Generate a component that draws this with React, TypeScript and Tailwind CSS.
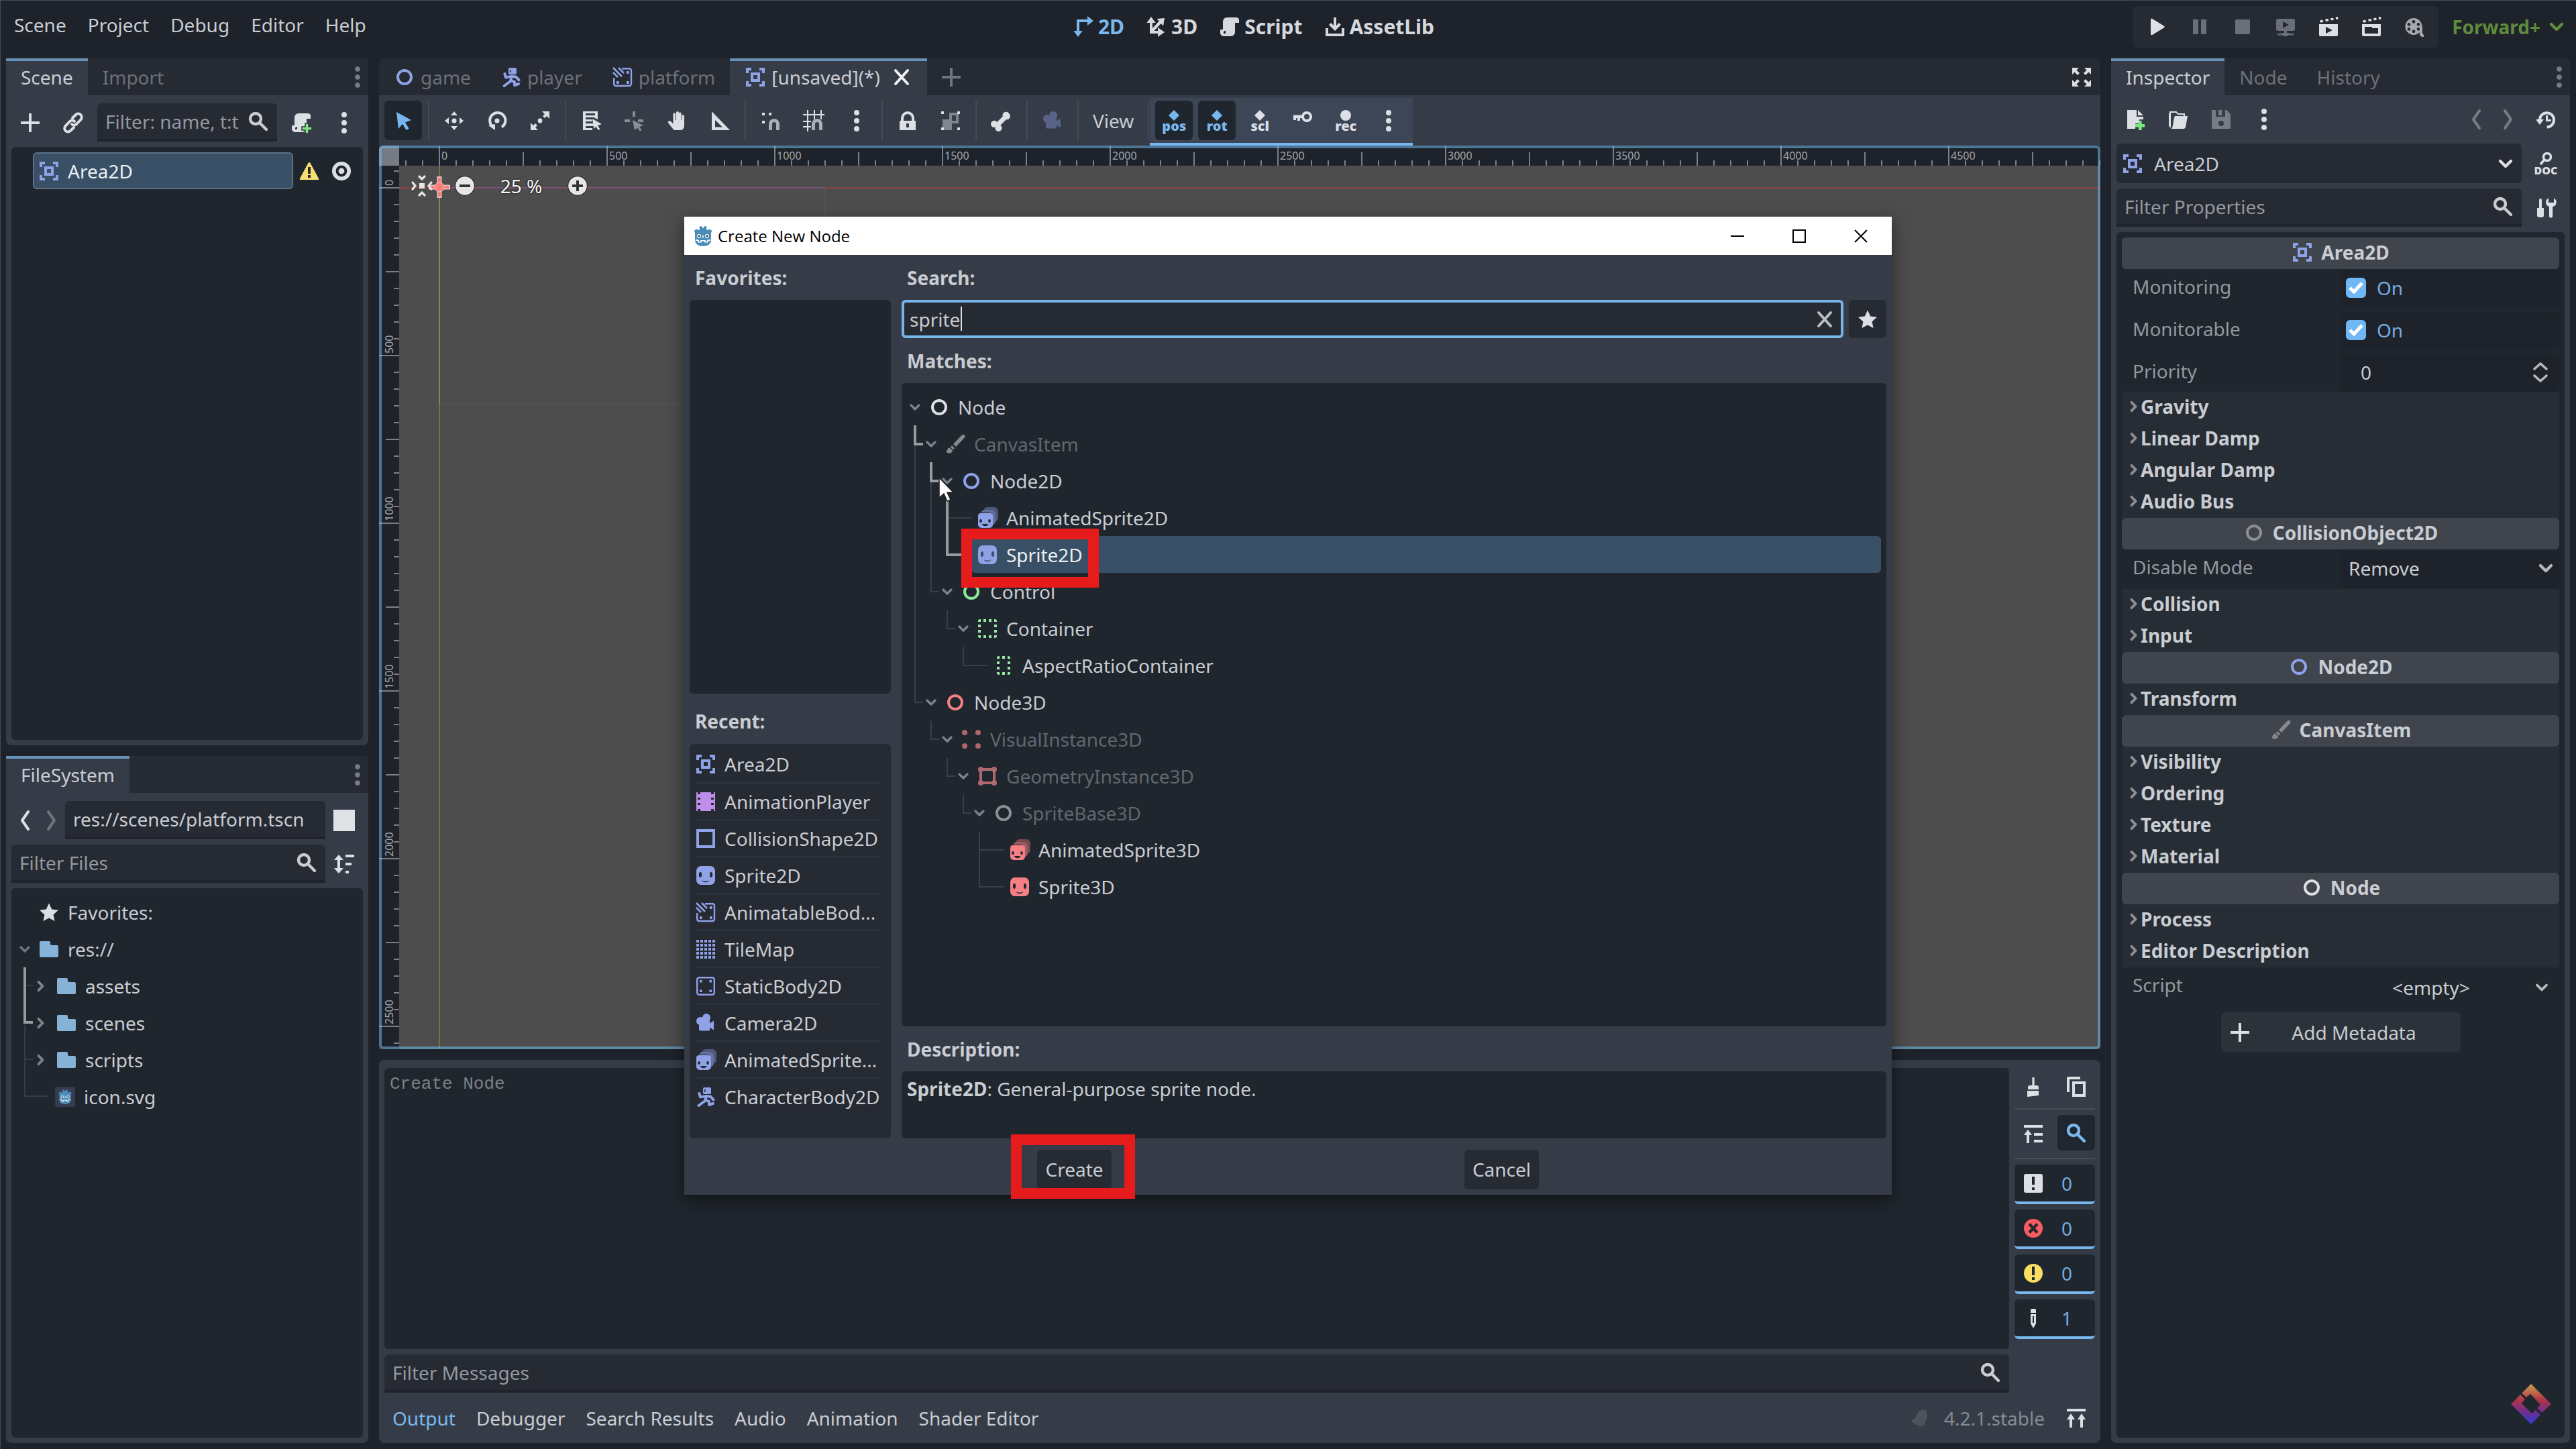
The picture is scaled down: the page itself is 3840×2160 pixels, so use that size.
import React, { JSX, ReactNode } from "react";

const line = {
  fill: "none",
  stroke: "currentColor",
  strokeWidth: 2,
} as const;

const frameCorners = (
  <path
    fillRule="evenodd"
    d="M1 1v4h2V3h2V1zm10 0v2h2v2h2V1zM4.500 4.500v7h7v-7zm2 2h3v3h-3zM1 11v4h4v-2H3v-2zm12 0v2h-2v2h4v-4z"
  />
);

const spriteFace = (
  <path
    fillRule="evenodd"
    d="M4.500 1h7A3.500 3.500 0 0 1 15 4.500v7a3.500 3.500 0 0 1-3.500 3.500h-7A3.500 3.500 0 0 1 1 11.500v-7A3.500 3.500 0 0 1 4.500 1zM4 5.500a1 1.200 0 0 0-1 1.200v1.600a1 1.200 0 0 0 2 0V6.700a1 1.200 0 0 0-1-1.200zm8 0a1 1.200 0 0 0-1 1.200v1.600a1 1.200 0 0 0 2 0V6.700a1 1.200 0 0 0-1-1.200zM5.300 11.500c.8 2.200 4.600 2.200 5.400 0-1.400 1-4 1-5.400 0z"
  />
);

const animatedFace = (
  <>
    <path
      fillOpacity=".4"
      d="M8 0h5a3 3 0 0 1 3 3v5a3 3 0 0 1-2 2.800V5a3 3 0 0 0-3-3H5.200A3 3 0 0 1 8 0z"
    />
    <path
      fillOpacity=".6"
      d="M6 2h5a3 3 0 0 1 3 3v5.500a3 3 0 0 1-2 2.600V7a3 3 0 0 0-3-3H3.200A3 3 0 0 1 6 2z"
    />
    <path
      fillRule="evenodd"
      d="M3 4.500h7a2 2 0 0 1 2 2V13a2.500 2.500 0 0 1-2.500 2.500h-6A2.500 2.500 0 0 1 1 13V6.500a2 2 0 0 1 2-2zM3 9c-.6 0-.9.600-.9 1.300s.3 1.200.9 1.200.9-.5.9-1.200S3.600 9 3 9zm6.500 0c-.6 0-.9.600-.9 1.300s.3 1.200.9 1.200.9-.5.9-1.200S10.100 9 9.500 9zM4 12.500c.5 2.200 4.200 2.200 4.700 0z"
    />
  </>
);

const snapMagnet = (
  <path
    opacity=".7"
    d="M9 15v-4.500a1.500 1.500 0 0 1 3 0V15h2.500v-4.500a4 4 0 0 0-8 0V15z"
  />
);

const scriptScroll = (
  <path
    fillRule="evenodd"
    d="M6 1a3 3 0 0 0-3 3v6H1v2.500A2.500 2.500 0 0 0 3.500 15H9a3 3 0 0 0 3-3V5h3V3a2 2 0 0 0-2-2zM4 11h1v2H3.500v-1z"
  />
);

const clapper = (
  <path d="M1.500 3.300l2-.5.800 1.600-2.200.5zm4-.9 2.200-.5.500 1.700-2.200.4zm4-.8 2-.4.500 1.600-2 .4zm3.800-.8 1.700-.3.300 1.700-1.700.3z" />
);

const godotHead = (
  <>
    <path
      fill="#4b8dba"
      d="M2 5.500 1.300 4l1.800-1.300L4.500 3.500l1-.4L5.300 1l1.600-.6.9 1.600h.4L9.100.4l1.600.6-.2 2.100 1 .4 1.400-.8L14.700 4 14 5.500V11c0 3-2.700 4.500-6 4.500S2 14 2 11z"
    />
    <circle cx="5" cy="8" r="1.500" fill="#fff" />
    <circle cx="11" cy="8" r="1.500" fill="#fff" />
    <circle cx="5" cy="8" r=".8" fill="#333" />
    <circle cx="11" cy="8" r=".8" fill="#333" />
    <path d="M8 7.500v1.700M2.300 10.800l2.200.4v1.200h2v-1h3v1h2v-1.200l2.200-.4" fill="none" stroke="#fff" strokeWidth=".8" />
  </>
);

const icons: Record<string, ReactNode> = {
  node: <circle cx="8" cy="8" r="5" {...line} />,
  area: frameCorners,
  sprite: spriteFace,
  animatedSprite: animatedFace,
  runner: (
    <>
      <path
        fillRule="evenodd"
        d="M7 1h4a1 1 0 0 1 1 1v3a1 1 0 0 1-1 1H7a1 1 0 0 1-1-1V2a1 1 0 0 1 1-1zm0 1.500v2h.8v-2z"
      />
      <path
        {...line}
        strokeLinecap="round"
        strokeLinejoin="round"
        d="M3.200 5.500 4 8.200l4.200-.7 3.300.2 2.300 2.500M8.500 7.500 7.500 11 2.800 14.500M7.500 10.500l3 1L10.500 14l3-1"
      />
    </>
  ),
  animatableBody: (
    <>
      <path
        {...line}
        strokeWidth="1.200"
        d="M7.500 1.600H13a1.500 1.500 0 0 1 1.500 1.500V13a1.500 1.500 0 0 1-1.500 1.500H3A1.500 1.500 0 0 1 1.600 13V8.500"
      />
      <path d="M11 3.500h1.800v2H11zM3.500 11h1.800v2H3.500zM11 11h1.800v2H11z" />
      <path {...line} strokeWidth="1.300" d="M1 4.500 4.500 8M1 1l6.500 6.500M5 1l4 4" />
    </>
  ),
  collisionShape: <rect x="2" y="2" width="12" height="12" {...line} />,
  staticBody: (
    <>
      <rect x="1.600" y="1.600" width="12.800" height="12.800" rx="1.500" {...line} strokeWidth="1.200" />
      <path d="M3.500 3.500h1.800v1.800H3.500zM10.700 3.500h1.800v1.800h-1.800zM3.500 10.700h1.800v1.800H3.500zM10.700 10.700h1.800v1.800h-1.800z" />
    </>
  ),
  film: (
    <path
      fillRule="evenodd"
      d="M1 1v14h1v-1.500h2V15h8v-1.500h2V15h1V1h-1v1.500h-2V1H4v1.500H2V1zm1 4h2v1.500H2zm10 0h2v1.500h-2zM2 9h2v1.500H2zm10 0h2v1.500h-2z"
    />
  ),
  tileMap: (
    <>
      {[1, 4, 7, 10, 13].map((y) =>
        [1, 4, 7, 10, 13].map((x) => <rect key={`${x}-${y}`} x={x} y={y} width="2" height="2" />)
      )}
    </>
  ),
  camera: (
    <>
      <circle cx="4" cy="6.500" r="3" />
      <circle cx="8.500" cy="4" r="3" />
      <path d="M3 6h8v2.200l3-2v7l-3-2V13a.8.8 0 0 1-.8.8H4a1 1 0 0 1-1-1z" />
    </>
  ),
  brush: (
    <path d="M15 1.200c-1-.7-2 0-2.600.6L6.500 8l2 2 5.900-6.300c.7-.8 1.300-1.800.6-2.500zM5.600 9 7.500 11l-1 1.200-2.200-2zM3.600 10.600c-1.500.2-1.400 2.400-2.600 3 1.500 1.700 4.600 1.700 5-.9z" />
  ),
  container: (
    <path d="M1 2.500A1.500 1.500 0 0 1 2.500 1H3v2H1zM5 1h2v2H5zm4 0h2v2H9zm4 0h.5A1.500 1.500 0 0 1 15 2.500V3h-2zM1 5h2v2H1zm12 0h2v2h-2zM1 9h2v2H1zm12 0h2v2h-2zM1 13h2v2h-.5A1.500 1.500 0 0 1 1 13.500zm4 0h2v2H5zm4 0h2v2H9zm4 0h2v.5a1.500 1.500 0 0 1-1.500 1.500H13z" />
  ),
  aspectContainer: (
    <path d="M3 2.500A1.500 1.500 0 0 1 4.500 1H5v2H3zM7 1h2v2H7zm4 0h.5A1.500 1.500 0 0 1 13 2.500V3h-2zM3 5h2v2H3zm8 0h2v2h-2zM3 9h2v2H3zm8 0h2v2h-2zM3 13h2v2h-.5A1.500 1.500 0 0 1 3 13.500zm4 0h2v2H7zm4 0h2v.5a1.500 1.500 0 0 1-1.500 1.500H11z" />
  ),
  visual: (
    <>
      <circle cx="3" cy="3" r="2" />
      <circle cx="13" cy="3" r="2" />
      <circle cx="3" cy="13" r="2" />
      <circle cx="13" cy="13" r="2" />
    </>
  ),
  geometry: (
    <>
      <rect x="3" y="3" width="10" height="10" {...line} />
      <circle cx="3" cy="3" r="2" />
      <circle cx="13" cy="3" r="2" />
      <circle cx="3" cy="13" r="2" />
      <circle cx="13" cy="13" r="2" />
    </>
  ),
  godot: godotHead,
  godotFile: (
    <>
      <rect x="-.5" y="-.5" width="17" height="17" rx="1.500" fill="#363d52" />
      <g transform="translate(1.500 1.500) scale(.82)">{godotHead}</g>
    </>
  ),
  folder: <path d="M1 3a1 1 0 0 1 1-1h6a1 1 0 0 1 1 1v1a1 1 0 0 0 1 1h4a1 1 0 0 1 1 1v7a1 1 0 0 1-1 1H2a1 1 0 0 1-1-1z" />,
  star: <path d="m8 1.300 2.100 4.500 4.900.6-3.700 3.300 1 4.800L8 12.200l-4.300 2.300 1-4.800L1 6.400l4.900-.6z" />,
  plus: <path d="M7 1v6H1v2h6v6h2V9h6V7H9V1z" />,
  link: (
    <path
      {...line}
      strokeLinecap="round"
      d="M7.500 4.500 9.800 2.200a2.500 2.500 0 0 1 4 3.300L10.500 9a2.300 2.300 0 0 1-3.500 0M8.500 11.500l-2.300 2.300a2.500 2.500 0 0 1-4-3.300L5.500 7A2.300 2.300 0 0 1 9 7"
    />
  ),
  search: (
    <>
      <circle cx="6" cy="6" r="4" {...line} strokeWidth="2.200" />
      <path {...line} strokeWidth="2.200" strokeLinecap="round" d="m9.500 9.500 4.500 4.500" />
    </>
  ),
  scriptAdd: (
    <>
      {scriptScroll}
      <path fill="#7ce87f" stroke="#363c47" strokeWidth=".8" d="M11 8.500v2.500H8.500v2.500H11V16h2.500v-2.500H16V11h-2.500V8.500z" />
    </>
  ),
  script: scriptScroll,
  dots: (
    <>
      <circle cx="8" cy="2" r="2" />
      <circle cx="8" cy="8" r="2" />
      <circle cx="8" cy="14" r="2" />
    </>
  ),
  dotsSmall: (
    <>
      <circle cx="8" cy="2" r="1.900" />
      <circle cx="8" cy="8" r="1.900" />
      <circle cx="8" cy="14" r="1.900" />
    </>
  ),
  warning: (
    <>
      <path fill="#f8df74" d="M8 1.500a.8.800 0 0 0-.7.400L1 13.500c-.3.600 0 1 .5 1h13c.6 0 .8-.4.500-1L8.700 1.900a.8.800 0 0 0-.7-.4z" />
      <path fill="#2b2b20" d="M7 5h2v5H7zm0 6h2v2H7z" />
    </>
  ),
  eye: (
    <>
      <circle cx="8" cy="8" r="5.600" {...line} strokeWidth="2.800" />
      <circle cx="8" cy="8" r="2.200" />
    </>
  ),
  back: <path {...line} strokeLinecap="round" strokeLinejoin="round" d="M10.500 1.500 6 8l4.500 6.500" />,
  forward: <path {...line} strokeLinecap="round" strokeLinejoin="round" d="M5.500 1.500 10 8l-4.500 6.500" />,
  square: <path d="M0 0h16v16H0z" />,
  sort: (
    <>
      <path d="M4 1 .5 5H3v6H.5L4 15l3.500-4H5V5h2.500z" />
      <path d="M9 1h6.500v2H9zM9 7h4.500v2H9zm0 6h2.500v2H9z" />
    </>
  ),
  chevronDown: <path {...line} strokeWidth="2.200" strokeLinecap="round" strokeLinejoin="round" d="m4 6 4 4 4-4" />,
  chevronRight: <path {...line} strokeWidth="2.200" strokeLinecap="round" strokeLinejoin="round" d="m6 4.500 3.500 3.500L6 11.500" />,
  axes2d: (
    <path d="M11 0v2.500H3V11H.7L4 15.500 7.300 11H5V4.500h6V7l4.500-3.500z" />
  ),
  axes3d: (
    <path d="M4 .5.700 5H3v8h6v2.500l5-3.500-5-3.500V11H6.300l5-5.400L13 7.300 14 1.500 8.300 2l1.600 1.800L5 9V5h2.300z" />
  ),
  download: (
    <path d="M7 1v6L5 5 3.500 6.500 8 11l4.500-4.500L11 5 9 7V1zM1 9v6h14V9h-2v4H3V9z" />
  ),
  play: <path d="M3.500 2.500v11a.7.700 0 0 0 1 .6l9-5.500a.7.700 0 0 0 0-1.200l-9-5.500a.7.700 0 0 0-1 .6z" />,
  pause: <path d="M3 2.500h4v11H3zm6 0h4v11H9z" />,
  stop: <rect x="2.500" y="2.500" width="11" height="11" rx="1" />,
  remote: (
    <path
      fillRule="evenodd"
      d="M2.500 2h11A1.500 1.500 0 0 1 15 3.500v6a1.500 1.500 0 0 1-1.500 1.500H9v1.500h1.500v.5H14v1.300h-4l-.6.700H6.500l-.6-.7H2V13h3.500v-.5H7V11H2.500A1.500 1.500 0 0 1 1 9.500v-6A1.500 1.500 0 0 1 2.500 2zM6 4v5l4.500-2.500z"
    />
  ),
  playScene: (
    <>
      {clapper}
      <path fillRule="evenodd" d="M1 6h14v8a1 1 0 0 1-1 1H2a1 1 0 0 1-1-1zm5 2v5l5-2.500z" />
    </>
  ),
  playCustom: (
    <>
      {clapper}
      <path fillRule="evenodd" d="M1 6h14v8a1 1 0 0 1-1 1H2a1 1 0 0 1-1-1zm2 2v5h10V9H8.500V8z" />
    </>
  ),
  reel: (
    <>
      <path
        fillRule="evenodd"
        d="M7.500 1.500a6 6 0 1 1 0 12.500 6 6 0 0 1 0-12.500zm0 1.500a1.200 1.200 0 1 0 0 2.400 1.200 1.200 0 0 0 0-2.400zM4 5a1.200 1.200 0 1 0 0 2.400A1.200 1.200 0 0 0 4 5zm7 0a1.200 1.200 0 1 0 0 2.400A1.200 1.200 0 0 0 11 5zM4 8.500a1.200 1.200 0 1 0 0 2.400 1.200 1.200 0 0 0 0-2.400zm7 0a1.200 1.200 0 1 0 0 2.400 1.200 1.200 0 0 0 0-2.400zm-3.500 1.700a1.200 1.200 0 1 0 0 2.400 1.200 1.200 0 0 0 0-2.400z"
      />
      <path d="M12 8h2v5l1 1v1.500h-1.500L12 14z" />
    </>
  ),
  distraction: (
    <path d="M1 1v5l1.800-1.800L5 6.500 6.500 5 4.200 2.800 6 1zm14 0v5l-1.800-1.800L11 6.500 9.500 5l2.300-2.200L10 1zM1 15v-5l1.800 1.800L5 9.500 6.500 11l-2.300 2.200L6 15zm14 0v-5l-1.800 1.800L11 9.500 9.500 11l2.300 2.200L10 15z" />
  ),
  close: <path {...line} strokeLinecap="round" d="m3.500 3 9 10m0-10-9 10" />,
  select: <path d="m3 1.500 11 6-4.500 1.700 2.800 4.500-2 1.300-2.800-4.600L4.500 14z" />,
  move: (
    <>
      <circle cx="8" cy="8" r="1.800" />
      <path d="M8 1 5.500 4h5zm0 14-2.500-3h5zM1 8l3-2.500v5zm14 0-3-2.500v5z" />
    </>
  ),
  rotate: (
    <>
      <path {...line} d="M5 12.500A5.800 5.800 0 1 1 11.500 12.700" />
      <circle cx="8" cy="8" r="1.800" />
      <path d="M1.500 11.500 6.500 10.500v4.500z" />
    </>
  ),
  scale: (
    <>
      <circle cx="8" cy="8" r="1.700" />
      <path d="M9.500 1H15v5.500l-2-2-1.500 1.500L10 4.500 11.500 3zM6.500 15H1V9.500l2 2L4.500 10 6 11.500 4.500 13z" />
    </>
  ),
  listSelect: (
    <>
      <path fillRule="evenodd" d="M2 1h11v6l-3-1.500H4v1.500h4.500l.6 1.500H4V10h5.700l.6 2H4v1.500h5V15H2zm2 1.500V4h7V2.500z" />
      <path d="m9 6.500 7 4-3 1 1.700 2.700-1.300.8-1.700-2.600L10.200 14z" />
    </>
  ),
  pivot: (
    <g opacity=".5">
      <path d="M7 1h2v4H7zM1 7h4v2H1zm10 0h4v2h-4z" />
      <path d="m7 7.500 8 4-3 1 1.700 2.500-1.300.8-1.700-2.600L8.500 15z" />
    </g>
  ),
  hand: (
    <path d="M8.500 1a1 1 0 0 0-1 1v5.500H7V3a.9.900 0 0 0-1.800 0v7.200L3.500 8.500C2.500 7.600 1 8.400 1.500 9.500L5 14c.5.700 1 1 2 1h3.500a3 3 0 0 0 3-3V4.500a.9.900 0 0 0-1.800 0v3h-.4V2.700a.9.900 0 0 0-1.800 0V7.500V2a1 1 0 0 0-1-1z" />
  ),
  rulerTool: <path fillRule="evenodd" d="M2 1v14h13.500zm2.500 6.500L10 12.800H4.500z" />,
  smartSnap: (
    <>
      <path d="M1.500 2h2v2h-2zm5 0h2v2h-2zm-5 6h2v2h-2z" />
      {snapMagnet}
    </>
  ),
  gridSnap: (
    <>
      <path d="M3 0h1v3h4V0h1v3h4V0h1v3h2v1h-2v3h-1V4H9v3H8V4H4v4h2v1H4v3h2v1H4v3H3v-3H0v-1h3V9H0V8h3V4H0V3h3z" />
      {snapMagnet}
    </>
  ),
  lock: (
    <path
      fillRule="evenodd"
      d="M8 1a5 5 0 0 0-5 5v2H2v7h12V8h-1V6a5 5 0 0 0-5-5zm0 2a3 3 0 0 1 3 3v2H5V6a3 3 0 0 1 3-3zM7 10h2v3H7z"
    />
  ),
  group: (
    <>
      <path opacity=".45" fillRule="evenodd" d="M7 2h7v8H9v5H2V7h5zm2 2v4h3V4z" />
      <path d="M1 1h2v2H1zm12 0h2v2h-2zM1 13h2v2H1zm12 0h2v2h-2z" />
    </>
  ),
  bone: (
    <path d="M10.500 1.500a2.400 2.400 0 0 0-1.600 3.200L4.600 9a2.500 2.500 0 1 0-1.300 3.800 2.500 2.500 0 1 0 3.900-1.400l4.200-4.300a2.500 2.500 0 0 0 2.300-4.200 2.500 2.500 0 0 0-3.200-1.400z" />
  ),
  key: (
    <path fillRule="evenodd" d="M11 1a4 4 0 1 1-3.800 5H6v2H4V6H3v1.500H1V3.800h6.200A4 4 0 0 1 11 1zm0 2a2 2 0 1 0 0 4 2 2 0 0 0 0-4z" />
  ),
  newFile: (
    <>
      <path d="M2 1v14h6v-4h3V8h3V6H9V1zm8 0v4h4z" />
      <path fill="#7ce87f" d="M10.500 9v2.500H8v2.300h2.500V16h2.300v-2.200H15v-2.300h-2.200V9z" />
    </>
  ),
  openFolder: (
    <>
      <path {...line} strokeWidth="1" d="M2 14V2.500h4.500L8 4h4.500v2M1.500 13V3.500" />
      <path d="M5.500 5.500H15l-1.500 8.300a1.500 1.500 0 0 1-1.500 1.200H2.500c2 0 1.500-6 3-9.500z" />
    </>
  ),
  save: (
    <path
      fillRule="evenodd"
      d="M1 1v13a1 1 0 0 0 1 1h12a1 1 0 0 0 1-1V4l-3-3h-1v5H4V1zm5 0v4h2.500V1zm2 8a2 2 0 1 1 0 4 2 2 0 0 1 0-4z"
    />
  ),
  history: (
    <>
      <path {...line} d="M3.500 9A5.300 5.300 0 1 1 8.800 13.700" />
      <path d="M.5 8h6L3.500 12zM8 5h1.500v3H12v1.500H8z" />
    </>
  ),
  tools: (
    <path d="M4 1a1 1 0 0 0-1 1v6H1.500v5.500A1.500 1.500 0 0 0 3 15h2a1.500 1.500 0 0 0 1.500-1.500V8H5V2a1 1 0 0 0-1-1zm6-.2A3.300 3.300 0 0 0 10.500 7v7a1.300 1.300 0 0 0 2.600 0V7A3.300 3.300 0 0 0 14 .8V4h-4z" />
  ),
  upDown: (
    <path {...line} strokeWidth="1.800" strokeLinecap="round" strokeLinejoin="round" d="m3.500 5.500 4.500-4 4.500 4m-9 5 4.500 4 4.500-4" />
  ),
  clear: <path d="M7.200 1v6H5.500a1.500 1.500 0 0 0-1.500 1.500V10h8V8.500A1.500 1.500 0 0 0 10.500 7H8.800V1zM3.500 11v4.500l8.500-1V11z" />,
  copy: (
    <path fillRule="evenodd" d="M2 .5A1 1 0 0 0 1 1.500V12h2V2.500h8v-2zM5 4v11.500h10V4zm2 2h6v7.500H7z" />
  ),
  collapse: <path d="M1 1.500h14v2H1zM4 5 1 9h2v6h2V9h2zm4.500 2.500H15v2H8.500zm0 5H15v2H8.500z" />,
  errorBadge: (
    <>
      <circle cx="8" cy="8" r="7" fill="#f75d60" />
      <path d="m5 4.800 6 6.400m0-6.400-6 6.400" fill="none" stroke="#23282f" strokeWidth="2.200" />
    </>
  ),
  warnBadge: (
    <>
      <circle cx="8" cy="8" r="7" fill="#f8df64" />
      <path d="M7 3h2v6.500H7zm0 8h2v2H7z" fill="#23282f" />
    </>
  ),
  popup: <path fillRule="evenodd" d="M2.500 1h11A1.500 1.500 0 0 1 15 2.500v11a1.500 1.500 0 0 1-1.500 1.500h-11A1.500 1.500 0 0 1 1 13.500v-11A1.500 1.500 0 0 1 2.500 1zM7 3v6h2V3zm0 8v2h2v-2z" />,
  pencil: <path fillRule="evenodd" d="M6 2a1 1 0 0 1 1-1h2a1 1 0 0 1 1 1v2H6zm0 3h4v7l-2 3.500L6 12zm1.500 1.500v5h1v-5z" />,
  bell: <path d="M9.500 1.500c-3 1-4.500 3.500-5.500 6.500L1 9.500C2 12 6 14 10.500 14l1-3c1.500-3 2-6 .5-9zM6 14.200c0 1.600 2 1.800 2.500.3z" />,
  expandUp: <path d="M1 1h14v2H1zm3 3.500L1 9h2v6h2V9h2zm8 0L9 9h2v6h2V9h2z" />,
  centerView: (
    <>
      <rect x="6" y="6" width="4" height="4" />
      <path {...line} strokeWidth="1.600" strokeLinecap="round" d="m6 1 2 2 2-2M6 15l2-2 2 2M1 5.500 3 8l-2 2.500M15 5.500 13 8l2 2.500" />
    </>
  ),
  zoomOut: (
    <>
      <circle cx="8" cy="8" r="7.200" fill="#e6e6e6" stroke="#2b2b2b" strokeWidth=".6" />
      <path fill="#333" d="M4 7h8v2H4z" />
    </>
  ),
  zoomIn: (
    <>
      <circle cx="8" cy="8" r="7.200" fill="#e6e6e6" stroke="#2b2b2b" strokeWidth=".6" />
      <path fill="#333" d="M7 4v3H4v2h3v3h2V9h3V7H9V4z" />
    </>
  ),
};

const Icon = ({
  name,
  size = "size-8",
  className = "",
}: {
  name: string;
  size?: string;
  className?: string;
}): JSX.Element => (
  <svg viewBox="0 0 16 16" fill="currentColor" aria-hidden="true" className={`${size} shrink-0 overflow-visible ${className}`}>
    {icons[name]}
  </svg>
);

const IconButton = ({
  icon,
  label,
  className = "h-14 text-[#dcdfe4]",
}: {
  icon: string;
  label: string;
  className?: string;
}): JSX.Element => (
  <button aria-label={label} className={`flex w-14 shrink-0 items-center justify-center rounded-md ${className}`}>
    <Icon name={icon} />
  </button>
);

const KeyButton = ({ label, active }: { label: string; active?: boolean }): JSX.Element => (
  <button
    className={`flex h-[59px] w-14 flex-col items-center justify-center rounded-md ${
      active ? "bg-[#20262e] text-[#79b8ee]" : "text-[#dcdfe4]"
    }`}
  >
    <svg viewBox="0 0 16 16" fill="currentColor" className="size-4 overflow-visible">
      {label === "rec" ? <circle cx="8" cy="8" r="8" /> : <path d="m8 0 8 8-8 8-8-8z" />}
    </svg>
    <span className="text-[20px] leading-4 font-black">{label}</span>
  </button>
);

const Separator = (): JSX.Element => (
  <span className="flex h-[59px] w-1 shrink-0 justify-center">
    <span className="w-0.5 bg-[#454a55]" />
  </span>
);

const Tab = ({
  label,
  icon,
  active,
  closable,
}: {
  label: string;
  icon?: string;
  active?: boolean;
  closable?: boolean;
}): JSX.Element => (
  <button
    className={`flex h-[55px] shrink-0 items-center gap-2 border-t-4 px-[22px] pb-1 ${
      active ? "border-[#6893b8] bg-[#363c47] text-[#c9ccd2]" : "border-transparent text-[#6c7079]"
    }`}
  >
    {icon && <Icon name={icon} className="text-[#8fa2e8]" />}
    {label}
    {closable && <Icon name="close" className="ml-2 text-[#f0f2f5]" />}
  </button>
);

const TabBar = ({ children, end = "dotsSmall" }: { children: ReactNode; end?: string }): JSX.Element => (
  <div className="flex items-center rounded-t-lg bg-[#262a33]">
    {children}
    <button
      aria-label="Dock options"
      className={`ml-auto flex w-8 ${end === "dotsSmall" ? "text-[#777b84]" : "mr-3 text-[#dcdfe4]"}`}
    >
      <Icon name={end} />
    </button>
  </div>
);

const FilterInput = ({
  label,
  placeholder,
  value,
  search = true,
}: {
  label: string;
  placeholder?: string;
  value?: string;
  search?: boolean;
}): JSX.Element => (
  <label className="flex h-[57px] min-w-0 flex-1 items-center rounded-t-md border-b-4 border-[#20232c] bg-[#262a33] px-3">
    <input
      aria-label={label}
      placeholder={placeholder}
      defaultValue={value}
      className="w-full min-w-0 bg-transparent text-[#c9ccd2] outline-none placeholder:text-[#94989f]"
    />
    {search && <Icon name="search" className="text-[#c9ccd2]" />}
  </label>
);

const Header = (): JSX.Element => (
  <header className="flex h-[87px] shrink-0 items-center justify-between pb-2">
    <nav className="flex gap-2 pb-1.5">
      {["Scene", "Project", "Debug", "Editor", "Help"].map((item) => (
        <button key={item} className="px-3">
          {item}
        </button>
      ))}
    </nav>
    <nav className="flex gap-2 text-[30px] font-bold">
      {[
        ["axes2d", "2D"],
        ["axes3d", "3D"],
        ["script", "Script"],
        ["download", "AssetLib"],
      ].map(([icon, item]) => (
        <button
          key={item}
          className={`flex items-center gap-1.5 px-3 ${item === "2D" ? "text-[#79b8ee]" : "text-[#d5d8dd]"}`}
        >
          <Icon name={icon} />
          {item}
        </button>
      ))}
    </nav>
    <div className="flex items-center gap-2">
      <div className="flex h-[62px] items-center gap-2 rounded-md bg-[#262a33] px-2">
        <IconButton icon="play" label="Play" />
        <IconButton icon="pause" label="Pause" className="h-14 text-[#6b6f79]" />
        <IconButton icon="stop" label="Stop" className="h-14 text-[#6b6f79]" />
        <IconButton icon="remote" label="Remote debug" className="h-14 text-[#6b6f79]" />
        <IconButton icon="playScene" label="Play scene" />
        <IconButton icon="playCustom" label="Play custom scene" />
        <IconButton icon="reel" label="Movie maker" className="h-14 text-[#a6a9b0]" />
      </div>
      <button className="flex items-center gap-2 pr-1 pl-3 font-bold text-[#5f8b3d]">
        Forward+
        <Icon name="chevronDown" />
      </button>
    </div>
  </header>
);

const SceneDock = (): JSX.Element => (
  <section className="flex flex-1 flex-col rounded-lg bg-[#363c47]">
    <TabBar>
      <Tab label="Scene" active />
      <Tab label="Import" />
    </TabBar>
    <div className="flex flex-1 flex-col gap-2 p-2 pt-3">
      <div className="flex items-center gap-2">
        <IconButton icon="plus" label="Add node" />
        <IconButton icon="link" label="Instance scene" />
        <FilterInput label="Filter nodes" placeholder="Filter: name, t:t" />
        <IconButton icon="scriptAdd" label="Attach script" />
        <IconButton icon="dots" label="More" />
      </div>
      <div className="flex-1 rounded-md bg-[#20262e] p-2">
        <div className="flex items-center gap-2 pl-6">
          <button className="flex h-[55px] flex-1 items-center gap-3 rounded-md border-2 border-[#5d7285] bg-[#384f66] px-1.5 text-[#eceff2]">
            <Icon name="area" className="text-[#8fa2e8]" />
            Area2D
          </button>
          <button aria-label="Node warning">
            <Icon name="warning" />
          </button>
          <button aria-label="Toggle visibility" className="mx-2">
            <Icon name="eye" className="text-[#dcdfe4]" />
          </button>
        </div>
      </div>
    </div>
  </section>
);

const folders = ["assets", "scenes", "scripts"];

const FileSystemDock = (): JSX.Element => (
  <section className="flex flex-1 flex-col rounded-lg bg-[#363c47]">
    <TabBar>
      <Tab label="FileSystem" active />
    </TabBar>
    <div className="flex flex-1 flex-col gap-2 p-2 pt-3">
      <div className="flex items-center">
        <button aria-label="Back" className="flex w-10 justify-center text-[#dcdfe4]">
          <Icon name="back" />
        </button>
        <button aria-label="Forward" className="flex w-10 justify-center text-[#6f747e]">
          <Icon name="forward" />
        </button>
        <FilterInput label="Path" value="res://scenes/platform.tscn" search={false} />
        <IconButton icon="square" label="Toggle split mode" className="h-14 text-[#e0e1e4]" />
      </div>
      <div className="flex items-center">
        <FilterInput label="Filter files" placeholder="Filter Files" />
        <IconButton icon="sort" label="Sort files" />
      </div>
      <div className="relative flex-1 rounded-md bg-[#20262e] px-2 py-2">
        <svg className="absolute inset-0 size-full" fill="none">
          <path d="M22 145h10M20 204v106h36M20 255h12" stroke="#373d46" strokeWidth="2" />
          <path d="M20 118v82h12" stroke="#979ba2" strokeWidth="4" />
        </svg>
        <div className="relative flex h-[55px] items-center gap-3 pl-8">
          <Icon name="star" className="text-[#dcdfe4]" />
          Favorites:
        </div>
        <div className="relative flex h-[55px] items-center gap-3">
          <Icon name="chevronDown" size="size-6" className="-mr-1 text-[#6f747e]" />
          <Icon name="folder" className="text-[#87b2d8]" />
          res://
        </div>
        {folders.map((folder) => (
          <div key={folder} className="relative flex h-[55px] items-center gap-2 pl-[22px]">
            <Icon name="chevronRight" size="size-7" className="-mr-1 text-[#7d828b]" />
            <Icon name="folder" className="mx-1 text-[#87b2d8]" />
            {folder}
          </div>
        ))}
        <div className="relative flex h-[55px] items-center gap-3 pl-14">
          <Icon name="godotFile" size="size-7" className="mx-0.5" />
          icon.svg
        </div>
      </div>
    </div>
  </section>
);

const CanvasToolbar = (): JSX.Element => (
  <div className="flex h-[75px] items-center gap-2 pl-2 text-[#dcdfe4]">
    <IconButton icon="select" label="Select" className="h-[59px] bg-[#20262e] text-[#79b8ee]" />
    <Separator />
    <IconButton icon="move" label="Move" />
    <IconButton icon="rotate" label="Rotate" />
    <IconButton icon="scale" label="Scale" />
    <Separator />
    <IconButton icon="listSelect" label="List select" />
    <IconButton icon="pivot" label="Pivot" />
    <IconButton icon="hand" label="Pan" />
    <IconButton icon="rulerTool" label="Ruler" />
    <Separator />
    <IconButton icon="smartSnap" label="Smart snap" />
    <IconButton icon="gridSnap" label="Grid snap" />
    <IconButton icon="dots" label="Snap options" />
    <Separator />
    <IconButton icon="lock" label="Lock" />
    <IconButton icon="group" label="Group" />
    <Separator />
    <IconButton icon="bone" label="Skeleton" />
    <Separator />
    <IconButton icon="camera" label="Camera override" className="h-14 text-[#596387]" />
    <Separator />
    <button className="px-3 text-[#c9ccd2]">View</button>
    <div className="flex self-stretch">
      <div className="flex items-center">
        <Separator />
      </div>
      <div className="mt-1 flex items-center gap-2 border-b-4 border-[#79b8ee] bg-[#3d4657] px-2">
        <KeyButton label="pos" active />
        <KeyButton label="rot" active />
        <KeyButton label="scl" />
        <IconButton icon="key" label="Insert key" />
        <KeyButton label="rec" />
        <IconButton icon="dots" label="Animation key options" />
      </div>
    </div>
  </div>
);

const originX = 90;
const originY = 63;
const ticksX = Array.from({ length: 102 }, (_, i) => i - 2);
const ticksY = Array.from({ length: 54 }, (_, i) => i - 1);

// 2D canvas with its rulers, one major tick every 500 units (250px at 25% zoom)
const Canvas = (): JSX.Element => (
  <svg className="absolute inset-0 size-full" fontSize="16" fill="#a3a7ad">
    <rect width="100%" height="100%" fill="#4d4d4d" />
    <rect width="100%" height="30" fill="#1e222a" />
    <rect width="30" height="100%" fill="#1e222a" />
    {ticksX.map((i) => {
      const x = originX + i * 25;
      const top = i % 10 === 0 ? 0 : i % 5 === 0 ? 10 : 22;
      return (
        <g key={i}>
          <path d={`M${x} ${top}V30`} stroke="#7b7f87" strokeWidth="2" />
          {i % 10 === 0 && (
            <text x={x + 3} y="21">
              {i * 50}
            </text>
          )}
        </g>
      );
    })}
    {ticksY.map((i) => {
      const y = originY + i * 25;
      const left = i % 10 === 0 ? 0 : i % 5 === 0 ? 10 : 22;
      return (
        <g key={i}>
          <path d={`M${left} ${y}H30`} stroke="#7b7f87" strokeWidth="2" />
          {i % 10 === 0 && (
            <text transform={`translate(21 ${y - 3}) rotate(-90)`}>{i * 50}</text>
          )}
        </g>
      );
    })}
    <rect width="30" height="30" fill="#777b83" />
    <path d={`M30 ${originY}H3000`} stroke="#8b4248" strokeWidth="2" />
    <path d={`M${originX} ${originY}H666`} stroke="#7c5070" strokeWidth="2" />
    <path d={`M${originX} 30V2000`} stroke="#8ea23c" strokeWidth="1" />
    <path d={`M${originX} ${originY}V386`} stroke="#899a76" strokeWidth="1" />
    <path d={`M${originX} 386H665V${originY}`} fill="none" stroke="#5a5872" strokeWidth="1" />
    <path d="M90 46v32M74 62h32" stroke="#e8c4be" strokeWidth="7" />
    <path d="M90 48v28M76 62h28" stroke="#f07c74" strokeWidth="4" />
    <circle cx="90" cy="62" r="7" fill="#fa7f7a" stroke="#e8c4be" />
  </svg>
);

const Viewport = (): JSX.Element => (
  <section className="flex flex-1 flex-col rounded-t-lg bg-[#363c47]">
    <TabBar end="distraction">
      <Tab label="game" icon="node" />
      <Tab label="player" icon="runner" />
      <Tab label="platform" icon="animatableBody" />
      <Tab label="[unsaved](*)" icon="area" active closable />
      <button aria-label="New scene" className="px-5 text-[#6f747e]">
        <Icon name="plus" />
      </button>
    </TabBar>
    <CanvasToolbar />
    <div className="relative flex-1 overflow-hidden rounded-md">
      <Canvas />
      <div className="absolute top-11 left-12 flex items-center text-[#e6e6e6]">
        <button aria-label="Center view">
          <Icon name="centerView" />
        </button>
        <button aria-label="Zoom out" className="ml-8">
          <Icon name="zoomOut" />
        </button>
        <button className="w-[136px] leading-8 text-[#f5f5f5] [text-shadow:0_0_3px_#000]">25 %</button>
        <button aria-label="Zoom in">
          <Icon name="zoomIn" />
        </button>
      </div>
      <div className="pointer-events-none absolute inset-0 rounded-md border-4 border-[#74bbee]/55" />
    </div>
  </section>
);

const messageCounts = [
  { icon: "popup", label: "Messages", count: 0 },
  { icon: "errorBadge", label: "Errors", count: 0 },
  { icon: "warnBadge", label: "Warnings", count: 0 },
  { icon: "pencil", label: "Editor messages", count: 1 },
];

const bottomTabs = ["Output", "Debugger", "Search Results", "Audio", "Animation", "Shader Editor"];

const OutputPanel = (): JSX.Element => (
  <section className="flex shrink-0 flex-col rounded-lg bg-[#363c47] pt-3">
    <div className="flex gap-2 px-2">
      <div className="flex flex-1 flex-col gap-2">
        <div className="h-[419px] rounded-md bg-[#20262e] px-2 py-1 font-['Liberation_Mono',monospace] text-[26px] leading-10 text-[#7c8187]">
          Create Node
        </div>
        <div className="flex">
          <FilterInput label="Filter messages" placeholder="Filter Messages" />
        </div>
      </div>
      <div className="flex w-[120px] flex-col gap-2">
        <div className="flex justify-between">
          <IconButton icon="clear" label="Clear output" />
          <IconButton icon="copy" label="Copy selection" />
        </div>
        <hr className="-mt-1 border-t-2 border-[#4a4f5a]" />
        <div className="flex justify-between">
          <IconButton icon="collapse" label="Collapse duplicates" />
          <IconButton icon="search" label="Toggle search" className="h-[53px] bg-[#20262e] text-[#79b8ee]" />
        </div>
        <hr className="border-t-2 border-[#4a4f5a]" />
        {messageCounts.map(({ icon, label, count }) => (
          <button
            key={label}
            aria-label={label}
            className="flex h-[59px] items-center rounded-md border-b-4 border-[#79b8ee] bg-[#20262e] pr-2 pl-3 text-[#74aee0]"
          >
            <Icon name={icon} className="text-[#dcdfe4]" />
            <span className="flex-1">{count}</span>
          </button>
        ))}
      </div>
    </div>
    <footer className="flex h-[75px] items-center gap-[7px] px-2">
      {bottomTabs.map((item) => (
        <button key={item} className={`px-3 ${item === "Output" ? "text-[#79b8ee]" : ""}`}>
          {item}
        </button>
      ))}
      <Icon name="bell" className="ml-auto text-[#4d525d]" />
      <span className="px-3 text-[#868a92]">4.2.1.stable</span>
      <IconButton icon="expandUp" label="Expand bottom panel" />
    </footer>
  </section>
);

const ClassHeader = ({ label, icon, color }: { label: string; icon: string; color: string }): JSX.Element => (
  <h3 className="flex h-[47px] items-center justify-center gap-3 rounded-md bg-[#40444d] pb-1 font-bold">
    <Icon name={icon} className={color} />
    {label}
  </h3>
);

const Group = ({ label }: { label: string }): JSX.Element => (
  <button className="flex h-[47px] w-full items-center bg-[#272d35] pb-1 pl-1 font-bold">
    <Icon name="chevronRight" size="size-7" className="-mr-1 text-[#8b9098]" />
    {label}
  </button>
);

const Property = ({ label, id, children }: { label: string; id: string; children: ReactNode }): JSX.Element => (
  <div className="flex h-[55px] items-center">
    <label htmlFor={id} className="w-1/2 pb-2 pl-4 text-[#94989f]">
      {label}
    </label>
    <div className="relative flex h-full w-1/2 items-center rounded-md bg-[#1e222a] pb-1">{children}</div>
  </div>
);

const CheckProperty = ({ label }: { label: string }): JSX.Element => (
  <Property label={label} id={label}>
    <span className="relative ml-2 flex size-[30px]">
      <input id={label} type="checkbox" defaultChecked className="size-[30px] appearance-none rounded-md bg-[#70b8f5]" />
      <svg viewBox="0 0 30 30" className="pointer-events-none absolute inset-0" fill="none" stroke="#fff" strokeWidth="5">
        <path d="m6 15 6 6L24 8" />
      </svg>
    </span>
    <span className="ml-4 text-[#74aee0]">On</span>
  </Property>
);

const Inspector = (): JSX.Element => (
  <section className="flex w-[684px] shrink-0 flex-col rounded-lg bg-[#363c47]">
    <TabBar>
      <Tab label="Inspector" active />
      <Tab label="Node" />
      <Tab label="History" />
    </TabBar>
    <div className="flex flex-1 flex-col gap-2 p-2">
      <div className="flex h-14 items-center gap-2">
        <IconButton icon="newFile" label="New resource" />
        <IconButton icon="openFolder" label="Load resource" />
        <IconButton icon="save" label="Save resource" className="h-14 text-[#777b84]" />
        <IconButton icon="dots" label="Resource options" />
        <button aria-label="Previous object" className="ml-auto flex w-10 justify-center text-[#777b84]">
          <Icon name="back" />
        </button>
        <button aria-label="Next object" className="flex w-10 justify-center text-[#777b84]">
          <Icon name="forward" />
        </button>
        <IconButton icon="history" label="Object history" />
      </div>
      <div className="flex items-center gap-2">
        <div className="relative flex h-[59px] flex-1 items-center rounded-md bg-[#262a33]">
          <Icon name="area" className="pointer-events-none absolute left-2 text-[#8fa2e8]" />
          <select aria-label="Edited object" className="h-full w-full appearance-none pl-[56px] outline-none">
            <option>Area2D</option>
          </select>
          <Icon name="chevronDown" className="pointer-events-none absolute right-2 text-[#dcdfe4]" />
        </div>
        <button className="flex w-14 flex-col items-center text-[#dcdfe4]">
          <svg viewBox="0 0 20 20" className="size-5" fill="none" stroke="currentColor" strokeWidth="3.500">
            <circle cx="12" cy="8" r="5.500" />
            <path d="m8 12-6 7" />
          </svg>
          <span className="text-[16px] leading-4 font-black">DOC</span>
        </button>
      </div>
      <div className="flex items-center gap-2">
        <FilterInput label="Filter properties" placeholder="Filter Properties" />
        <IconButton icon="tools" label="Property options" />
      </div>
      <div className="relative flex-1 rounded-md bg-[#20262e] p-2">
        <ClassHeader label="Area2D" icon="area" color="text-[#8fa2e8]" />
        <div className="flex flex-col gap-2 pt-0.5">
          <CheckProperty label="Monitoring" />
          <CheckProperty label="Monitorable" />
          <Property label="Priority" id="priority">
            <input id="priority" defaultValue="0" className="w-full min-w-0 bg-transparent pl-[30px] outline-none" />
            <Icon name="upDown" className="mr-3 text-[#b6b9bf]" />
          </Property>
        </div>
        <Group label="Gravity" />
        <Group label="Linear Damp" />
        <Group label="Angular Damp" />
        <Group label="Audio Bus" />
        <ClassHeader label="CollisionObject2D" icon="node" color="text-[#8b8f96]" />
        <div className="py-0.5">
          <Property label="Disable Mode" id="disable-mode">
            <select id="disable-mode" className="h-full w-full appearance-none pl-3 outline-none">
              <option>Remove</option>
            </select>
            <Icon name="chevronDown" className="pointer-events-none absolute right-1 text-[#b6b9bf]" />
          </Property>
        </div>
        <Group label="Collision" />
        <Group label="Input" />
        <ClassHeader label="Node2D" icon="node" color="text-[#8fa2e8]" />
        <Group label="Transform" />
        <ClassHeader label="CanvasItem" icon="brush" color="text-[#85898f]" />
        <Group label="Visibility" />
        <Group label="Ordering" />
        <Group label="Texture" />
        <Group label="Material" />
        <ClassHeader label="Node" icon="node" color="text-[#dcdfe4]" />
        <Group label="Process" />
        <Group label="Editor Description" />
        <div className="flex h-[59px] items-center">
          <label htmlFor="script" className="w-1/2 pb-2 pl-4 text-[#94989f]">
            Script
          </label>
          <div className="relative flex h-full w-1/2 items-center">
            <select id="script" className="h-full w-full appearance-none pr-[56px] text-center outline-none">
              <option>&lt;empty&gt;</option>
            </select>
            <Icon name="chevronDown" size="size-7" className="pointer-events-none absolute right-3 text-[#b6b9bf]" />
          </div>
        </div>
        <button className="mx-auto mt-2 flex h-[59px] w-[357px] items-center rounded-md bg-[#2c323a] pr-1 pl-3">
          <Icon name="plus" className="text-[#dcdfe4]" />
          <span className="flex-1">Add Metadata</span>
        </button>
        <svg viewBox="0 0 60 60" className="absolute right-5 bottom-5 size-[60px]">
          <defs>
            <linearGradient id="mark" x1="0" y1="0" x2="0" y2="1">
              <stop offset="0" stopColor="#c8a24c" />
              <stop offset=".4" stopColor="#b23448" />
              <stop offset=".7" stopColor="#6c2f8e" />
              <stop offset="1" stopColor="#2f3cd6" />
            </linearGradient>
            <mask id="pieces">
              <path
                fill="#fff"
                d="M30 0 60 30 46 43 39 36 44 31 29 15 23 20 16 14zM14 16 21 23 16 29 31 44 37 39 44 46 30 60 0 30z"
              />
            </mask>
          </defs>
          <rect width="60" height="60" fill="url(#mark)" mask="url(#pieces)" />
        </svg>
      </div>
    </div>
  </section>
);

const recent = [
  { icon: "area", label: "Area2D" },
  { icon: "film", label: "AnimationPlayer" },
  { icon: "collisionShape", label: "CollisionShape2D" },
  { icon: "sprite", label: "Sprite2D" },
  { icon: "animatableBody", label: "AnimatableBod..." },
  { icon: "tileMap", label: "TileMap" },
  { icon: "staticBody", label: "StaticBody2D" },
  { icon: "camera", label: "Camera2D" },
  { icon: "animatedSprite", label: "AnimatedSprite..." },
  { icon: "runner", label: "CharacterBody2D" },
];

const levels = ["pl-0", "pl-6", "pl-12", "pl-[72px]", "pl-24", "pl-[120px]"];

const matches = [
  { level: 0, icon: "node", label: "Node", color: "text-[#dcdfe4]" },
  { level: 1, icon: "brush", label: "CanvasItem", color: "text-[#85898f]", dim: true },
  { level: 2, icon: "node", label: "Node2D", color: "text-[#8fa2e8]" },
  { level: 3, icon: "animatedSprite", label: "AnimatedSprite2D", color: "text-[#8fa2e8]", leaf: true },
  { level: 3, icon: "sprite", label: "Sprite2D", color: "text-[#8fa2e8]", leaf: true, selected: true },
  { level: 2, icon: "node", label: "Control", color: "text-[#8ee89a]" },
  { level: 3, icon: "container", label: "Container", color: "text-[#9be8a4]" },
  { level: 4, icon: "aspectContainer", label: "AspectRatioContainer", color: "text-[#9be8a4]", leaf: true },
  { level: 1, icon: "node", label: "Node3D", color: "text-[#f57f85]" },
  { level: 2, icon: "visual", label: "VisualInstance3D", color: "text-[#b0686f]", dim: true },
  { level: 3, icon: "geometry", label: "GeometryInstance3D", color: "text-[#b0686f]", dim: true },
  { level: 4, icon: "node", label: "SpriteBase3D", color: "text-[#8b8f96]", dim: true },
  { level: 5, icon: "animatedSprite", label: "AnimatedSprite3D", color: "text-[#f57f85]", leaf: true },
  { level: 5, icon: "sprite", label: "Sprite3D", color: "text-[#f57f85]", leaf: true },
];

const MatchTree = (): JSX.Element => (
  <div className="relative flex-1 rounded-md bg-[#20262e] p-2">
    <svg className="absolute inset-0 size-full" fill="none">
      <path
        stroke="#3a4049"
        strokeWidth="2"
        d="M20 92v384h12M44 148v163h12M70 201h34M68 338v28h12M92 393v28h36M44 504v27h12M68 559v27h12M92 614v27h12M116 669v82h36M116 696h36"
      />
      <path stroke="#979ba2" strokeWidth="4" d="M20 63v28h12M44 118v28h12M68 173v83h30" />
    </svg>
    {matches.map(({ level, icon, label, color, dim, leaf, selected }) => (
      <div key={label} className={`relative flex h-[55px] ${levels[level]}`}>
        <span className="flex w-6 shrink-0 items-center">
          {!leaf && <Icon name="chevronDown" size="size-6" className="text-[#7d828b]" />}
        </span>
        <button
          className={`flex flex-1 items-center gap-3 px-2 text-left ${
            selected ? "rounded-md bg-[#384f66] text-[#eceff2]" : dim ? "text-[#62676f]" : ""
          }`}
        >
          <Icon name={icon} className={color} />
          {label}
        </button>
      </div>
    ))}
  </div>
);

const CreateNodeDialog = (): JSX.Element => (
  <div
    role="dialog"
    aria-label="Create New Node"
    className="relative flex w-[1800px] flex-col bg-[#363c47] shadow-[0_8px_24px_rgba(0,0,0,0.5)]"
  >
    <div className="flex h-[57px] items-center bg-white pl-3 font-['Open_Sans',sans-serif] text-[24px] text-black">
      <Icon name="godot" className="mr-1.5" />
      Create New Node
      <div className="ml-auto flex">
        <button aria-label="Minimize" className="flex w-[92px] justify-center">
          <svg viewBox="0 0 20 20" className="size-5" stroke="#000" strokeWidth="2">
            <path d="M0 10h20" />
          </svg>
        </button>
        <button aria-label="Maximize" className="flex w-[92px] justify-center">
          <svg viewBox="0 0 20 20" className="size-5" fill="none" stroke="#000" strokeWidth="2">
            <path d="M1 1h18v18H1z" />
          </svg>
        </button>
        <button aria-label="Close" className="flex w-[92px] justify-center">
          <svg viewBox="0 0 20 20" className="size-5" fill="none" stroke="#000" strokeWidth="2">
            <path d="m1 1 18 18m0-18L1 19" />
          </svg>
        </button>
      </div>
    </div>
    <div className="flex h-[1317px] gap-4 px-2">
      <div className="flex w-[300px] flex-col">
        <h2 className="flex h-[67px] items-center px-2 font-bold">Favorites:</h2>
        <div className="h-[587px] rounded-md bg-[#20262e]" />
        <h2 className="flex h-[75px] items-center px-2 pt-1.5 font-bold">Recent:</h2>
        <ul className="flex-1 rounded-md bg-[#262a33] px-2 pt-0.5">
          {recent.map(({ icon, label }, i) => (
            <li key={label} className={`mr-2 flex h-[55px] items-center ${i > 0 ? "border-t-2 border-[#2e333c]" : ""}`}>
              <button className="flex items-center gap-3 whitespace-nowrap">
                <Icon name={icon} className={icon === "film" ? "text-[#be8eea]" : "text-[#8fa2e8]"} />
                {label}
              </button>
            </li>
          ))}
        </ul>
      </div>
      <div className="flex flex-1 flex-col">
        <label htmlFor="search" className="flex h-[67px] items-center px-2 font-bold">
          Search:
        </label>
        <div className="flex gap-2">
          <div className="relative flex h-[57px] flex-1 items-center rounded-md border-4 border-[#79b5e9] bg-[#262a33] px-2">
            <input id="search" defaultValue="sprite" className="w-full bg-transparent outline-none" />
            <span className="absolute top-1.5 left-[84px] h-9 w-0.5 bg-[#dcdfe4]" />
            <button aria-label="Clear search">
              <Icon name="close" className="text-[#b9bdc4]" />
            </button>
          </div>
          <IconButton icon="star" label="Favorite" className="h-[57px] bg-[#262a33] text-[#dcdfe4]" />
        </div>
        <h2 className="flex h-[67px] items-center px-2 font-bold">Matches:</h2>
        <MatchTree />
        <h2 className="flex h-[67px] items-center px-2 font-bold">Description:</h2>
        <p className="h-[100px] rounded-md bg-[#20262e] px-2 pt-2">
          <strong>Sprite2D</strong>: General-purpose sprite node.
        </p>
      </div>
    </div>
    <div className="flex h-[84px] items-center justify-around px-[263px] pt-2">
      <button className="h-[59px] w-[111px] rounded-md bg-[#262a33]">Create</button>
      <button className="h-[59px] w-[111px] rounded-md bg-[#262a33]">Cancel</button>
    </div>
    <div className="pointer-events-none absolute top-[465px] left-[413px] h-[88px] w-[205px] border-16 border-[#e61b1b]" />
    <div className="pointer-events-none absolute top-[1368px] left-[487px] h-24 w-[185px] border-16 border-[#e61b1b]" />
    <svg viewBox="0 0 24 38" className="pointer-events-none absolute top-[388px] left-[379px] h-[38px] w-6">
      <path d="M1 1v30l7-6 5 11 5-2-5-11h9z" fill="#fff" stroke="#222" strokeWidth="1.500" />
    </svg>
  </div>
);

export default function App(): JSX.Element {
  return (
    <div className="relative flex h-screen flex-col bg-[#1e222a] px-[9px] pb-[9px] font-['Noto_Sans',sans-serif] text-[28px] leading-9 whitespace-nowrap text-[#c9ccd2] shadow-[inset_1px_1px_0_#454a52]">
      <Header />
      <main className="flex min-h-0 flex-1 gap-4">
        <aside className="flex w-[540px] shrink-0 flex-col gap-4">
          <SceneDock />
          <FileSystemDock />
        </aside>
        <div className="flex min-w-0 flex-1 flex-col gap-4">
          <Viewport />
          <OutputPanel />
        </div>
        <Inspector />
      </main>
      <div className="absolute inset-x-0 top-[323px] flex justify-center">
        <CreateNodeDialog />
      </div>
    </div>
  );
}
